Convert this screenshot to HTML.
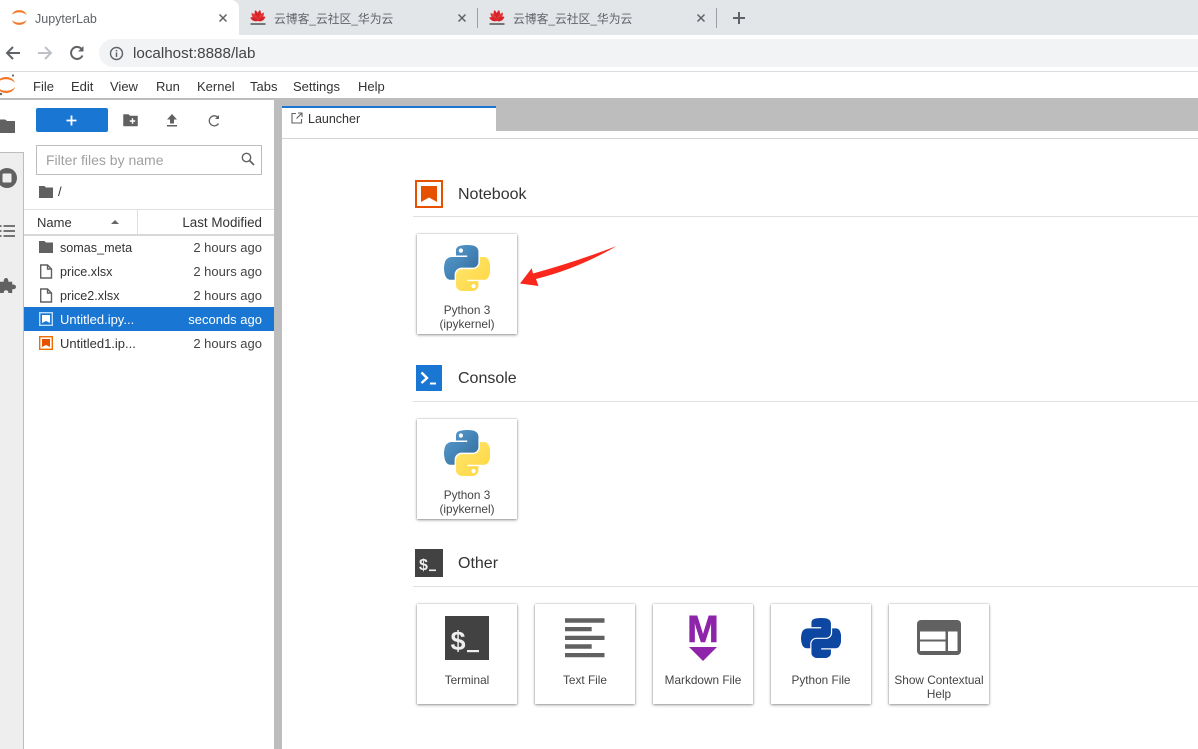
<!DOCTYPE html>
<html><head><meta charset="utf-8"><style>
html,body{margin:0;padding:0;background:#fff}
#p{position:relative;width:1198px;height:749px;overflow:hidden;background:#fff;font-family:"Liberation Sans","Noto Sans CJK SC",sans-serif;color:#333}
#p div,#p svg{position:absolute}
.t{white-space:nowrap;line-height:20px;height:20px}
.m{top:77px;font-size:13px;color:#333}
.n{font-size:12.600px;left:60px}
.d{font-size:13px;right:936px;text-align:right;color:#444}
.card{width:100px;height:100px;background:#fff;box-shadow:0 0 1px rgba(0,0,0,.35),0 1px 3px rgba(0,0,0,.4);}
.l{width:100px;text-align:center;font-size:11.800px;line-height:14px;color:#444}
.h{font-size:16px;left:458px;color:#333}
.hr{left:413px;right:0;height:1px;background:#e0e0e0}
</style></head><body><div id="p">
<svg width="0" height="0" style="position:absolute"><defs>
<linearGradient id="b" x1="0" y1="0" x2="1" y2="1"><stop offset="0" stop-color="#5a9fd4"/><stop offset="1" stop-color="#306998"/></linearGradient>
<linearGradient id="y" x1="0" y1="0" x2="1" y2="1"><stop offset="0" stop-color="#ffe873"/><stop offset="1" stop-color="#ffd43b"/></linearGradient>
<path id="pb" d="M54.919.001c-4.584.022-8.961.413-12.813 1.095C30.76 3.099 28.7 7.295 28.7 15.032v10.219h26.813v3.406H18.638c-7.793 0-14.616 4.684-16.75 13.594-2.462 10.213-2.571 16.586 0 27.25 1.906 7.938 6.458 13.594 14.25 13.594h9.219v-12.25c0-8.85 7.657-16.656 16.75-16.656h26.781c7.455 0 13.406-6.138 13.406-13.625V15.032c0-7.266-6.13-12.725-13.406-13.937C64.282.328 59.502-.02 54.918.002zM40.419 8.22c2.77 0 5.031 2.299 5.031 5.125 0 2.816-2.262 5.094-5.031 5.094-2.78 0-5.031-2.278-5.031-5.094 0-2.826 2.252-5.125 5.031-5.125z"/>
<path id="py" d="M85.638 28.657v11.906c0 9.231-7.826 17-16.75 17H42.106c-7.336 0-13.406 6.278-13.406 13.625v25.531c0 7.266 6.319 11.54 13.406 13.625 8.487 2.496 16.626 2.947 26.781 0 6.75-1.954 13.406-5.888 13.406-13.625V86.501H55.513v-3.405h40.187c7.793 0 10.696-5.436 13.406-13.594 2.8-8.399 2.681-16.476 0-27.25-1.926-7.757-5.604-13.594-13.406-13.594H85.638zM70.575 93.313c2.78 0 5.031 2.278 5.031 5.094 0 2.826-2.252 5.125-5.031 5.125-2.77 0-5.031-2.299-5.031-5.125 0-2.816 2.262-5.094 5.031-5.094z"/>
<g id="hw"><g fill="#d8232a">
<path d="M9 12C6 8 6.500 3 8.500 .8C11 3.500 11.500 8 9 12Z" transform="rotate(-11 9 12)"/>
<path d="M9 12C6 8 6.500 3 8.500 .8C11 3.500 11.500 8 9 12Z" transform="rotate(13 9 12)"/>
<path d="M9 12C6 8 6.500 4 8.500 1.800C11 4.500 11.500 8 9 12Z" transform="rotate(-36 9 12)" fill="#e0393a"/>
<path d="M9 12C6 8 6.500 4 8.500 1.800C11 4.500 11.500 8 9 12Z" transform="rotate(38 9 12)" fill="#e0393a"/>
<path d="M9 12C6.500 9.500 6.500 6 8.500 3.500C11 6 11.500 9.500 9 12Z" transform="rotate(-62 9 12)"/>
<path d="M9 12C6.500 9.500 6.500 6 8.500 3.500C11 6 11.500 9.500 9 12Z" transform="rotate(64 9 12)"/>
</g><rect x="1.500" y="14" width="15" height="2" fill="#777"/></g>
</defs></svg>

<!-- chrome tabs -->
<div style="left:0;top:0;width:1198px;height:35px;background:#e3e6e9"></div>
<div style="left:0;top:0;width:239px;height:35px;background:#fff;border-radius:0 8px 0 0"></div>
<svg style="left:11px;top:10px" width="17" height="16" viewBox="0 0 17 16"><path d="M1 5C2.500-1.500 14-1.500 15.500 5C12 1.500 4 1.500 1 5Z" fill="#f37726"/><path d="M1 10C2.500 16.500 14 16.500 15.500 10C12 13.500 4 13.500 1 10Z" fill="#f37726"/></svg>
<div class="t" style="left:35px;top:9px;font-size:12.500px;color:#5f6368">JupyterLab</div>
<svg style="left:218px;top:13px" width="10" height="10" viewBox="0 0 10 10"><path d="M1.500 1.500L8.500 8.500M8.500 1.500L1.500 8.500" stroke="#5f6368" stroke-width="1.500"/></svg>
<svg style="left:249px;top:9px" width="18" height="17" viewBox="0 0 18 17"><use href="#hw"/></svg>
<div class="t" style="left:274px;top:9px;font-size:11.800px;color:#5f6368">云博客_云社区_华为云</div>
<svg style="left:457px;top:13px" width="10" height="10" viewBox="0 0 10 10"><path d="M1.500 1.500L8.500 8.500M8.500 1.500L1.500 8.500" stroke="#5f6368" stroke-width="1.500"/></svg>
<div style="left:477px;top:8px;width:1px;height:20px;background:#9aa0a6"></div>
<svg style="left:488px;top:9px" width="18" height="17" viewBox="0 0 18 17"><use href="#hw"/></svg>
<div class="t" style="left:513px;top:9px;font-size:11.800px;color:#5f6368">云博客_云社区_华为云</div>
<svg style="left:696px;top:13px" width="10" height="10" viewBox="0 0 10 10"><path d="M1.500 1.500L8.500 8.500M8.500 1.500L1.500 8.500" stroke="#5f6368" stroke-width="1.500"/></svg>
<div style="left:716px;top:8px;width:1px;height:20px;background:#9aa0a6"></div>
<svg style="left:732px;top:11px" width="14" height="14" viewBox="0 0 14 14"><path d="M7 1V13M1 7H13" stroke="#5f6368" stroke-width="2"/></svg>

<!-- toolbar -->
<svg style="left:5px;top:45px" width="16" height="16" viewBox="0 0 16 16"><path d="M15 8H2M8 2L2 8L8 14" fill="none" stroke="#5f6368" stroke-width="2"/></svg>
<svg style="left:37px;top:45px" width="16" height="16" viewBox="0 0 16 16"><path d="M1 8H14M8 2L14 8L8 14" fill="none" stroke="#bdc1c6" stroke-width="2"/></svg>
<svg style="left:69px;top:45px" width="16" height="16" viewBox="0 0 16 16"><path d="M13.500 10.500A6 6 0 1 1 13 4.500" fill="none" stroke="#5f6368" stroke-width="2"/><path d="M14.500 1V6.500H9Z" fill="#5f6368"/></svg>
<div style="left:99px;top:39px;width:1110px;height:28px;border-radius:14px;background:#f1f3f4"></div>
<svg style="left:109px;top:46px" width="15" height="15" viewBox="0 0 15 15"><circle cx="7.500" cy="7.500" r="6" fill="none" stroke="#5f6368" stroke-width="1.400"/><path d="M7.500 6.500V11M7.500 4V5.400" stroke="#5f6368" stroke-width="1.500"/></svg>
<div class="t" style="left:133px;top:44px;font-size:15.200px;color:#444">localhost:8888/lab</div>
<div style="left:0;top:71px;width:1198px;height:1px;background:#dadce0"></div>

<!-- menu -->
<svg style="left:-4px;top:74px" width="24" height="22" viewBox="0 0 24 22"><path d="M1 9C3 1 17 1 19 9C15 4 5 4 1 9Z" fill="#f37726"/><path d="M1 13C3 21 17 21 19 13C15 18 5 18 1 13Z" fill="#f37726"/><circle cx="17" cy="1.500" r="1.100" fill="#666"/><circle cx="5" cy="20" r="1.200" fill="#666"/></svg>
<div class="t m" style="left:33px">File</div>
<div class="t m" style="left:71px">Edit</div>
<div class="t m" style="left:110px">View</div>
<div class="t m" style="left:156px">Run</div>
<div class="t m" style="left:197px">Kernel</div>
<div class="t m" style="left:250px">Tabs</div>
<div class="t m" style="left:293px">Settings</div>
<div class="t m" style="left:358px">Help</div>
<div style="left:0;top:98px;width:1198px;height:2px;background:#bdbdbd"></div>

<!-- sidebar -->
<div style="left:0;top:152px;width:23px;height:597px;background:#eee"></div>
<div style="left:0;top:152px;width:24px;height:1px;background:#bdbdbd"></div>
<div style="left:23px;top:152px;width:1px;height:597px;background:#bdbdbd"></div>
<svg style="left:-3px;top:116px" width="19" height="18" viewBox="0 0 19 18"><path d="M1 4H8L10 5.500H17.500V16.500H1Z" fill="#616161" stroke="#616161" stroke-linejoin="round"/></svg>
<svg style="left:-3px;top:168px" width="20" height="20" viewBox="0 0 20 20"><circle cx="10" cy="10" r="10" fill="#616161"/><rect x="5.500" y="5.500" width="9" height="9" rx="1" fill="#eee"/></svg>
<svg style="left:0;top:224px" width="16" height="14" viewBox="0 0 16 14"><path d="M0 2H1.500M3.500 2H15M0 7H1.500M3.500 7H15M0 12H1.500M3.500 12H15" stroke="#757575" stroke-width="2"/></svg>
<svg style="left:-2px;top:277px" width="18" height="17" viewBox="0 0 19 18"><path d="M2 5H6C6 2 7 1 8.500 1S11 2 11 5H15V8C18 8 19 9 19 10.500S18 13 15 13V17H11C11 15 10 14 8.500 14S6 15 6 17H2Z" fill="#616161"/></svg>

<!-- file browser -->
<div style="left:36px;top:108px;width:72px;height:24px;background:#1976d2;border-radius:2px"></div>
<svg style="left:66px;top:115px" width="11" height="11" viewBox="0 0 11 11"><path d="M5.500 .5V10.500M.5 5.500H10.500" stroke="#fff" stroke-width="1.800"/></svg>
<svg style="left:123px;top:113px" width="15" height="14" viewBox="0 0 15 14"><path d="M.5 1.500H5.500L7 3H14.500V13H.5Z" fill="#616161" stroke="#616161" stroke-width=".5" stroke-linejoin="round"/><path d="M9.500 5.300V10.700M6.800 8H12.200" stroke="#fff" stroke-width="1.400"/></svg>
<svg style="left:166px;top:114px" width="12" height="13" viewBox="0 0 12 13"><path d="M6 0L11 5.500H8V9.500H4V5.500H1Z M1 11H11V12.500H1Z" fill="#616161"/></svg>
<svg style="left:207px;top:114px" width="14" height="14" viewBox="0 0 14 14"><path d="M11.500 9.500A5 5 0 1 1 11 3.500" fill="none" stroke="#616161" stroke-width="1.300"/><path d="M12 1V5H8Z" fill="#616161"/></svg>
<div style="left:36px;top:145px;width:224px;height:28px;border:1px solid #bdbdbd"></div>
<div class="t" style="left:46px;top:150px;font-size:14px;color:#a0a0a0">Filter files by name</div>
<svg style="left:241px;top:152px" width="14" height="14" viewBox="0 0 14 14"><circle cx="5.500" cy="5.500" r="4.200" fill="none" stroke="#616161" stroke-width="1.400"/><path d="M8.500 8.500L13 13" stroke="#616161" stroke-width="1.700"/></svg>
<svg style="left:39px;top:186px" width="14" height="12" viewBox="0 0 14 12"><path d="M0 0H5.500L7 1.500H14V12H0Z" fill="#616161"/></svg>
<div class="t" style="left:58px;top:182px;font-size:13px;color:#333">/</div>
<div style="left:24px;top:209px;width:250px;height:1px;background:#e0e0e0"></div>
<div style="left:24px;top:234px;width:250px;height:2px;background:#d8d8d8"></div>
<div style="left:137px;top:210px;width:1px;height:24px;background:#e0e0e0"></div>
<div class="t" style="left:37px;top:213px;font-size:13px;color:#333">Name</div>
<svg style="left:110px;top:219px" width="10" height="5" viewBox="0 0 10 5"><path d="M1 5L5 1L9 5Z" fill="#666"/></svg>
<div class="t" style="right:936px;top:213px;font-size:13.400px;color:#333">Last Modified</div>

<svg style="left:39px;top:241px" width="14" height="12" viewBox="0 0 14 12"><path d="M0 0H5.500L7 1.500H14V12H0Z" fill="#616161"/></svg>
<div class="t n" style="top:238px">somas_meta</div><div class="t d" style="top:238px">2 hours ago</div>
<svg style="left:39px;top:264px" width="14" height="15" viewBox="0 0 14 15"><path d="M1.700 1H8.500L12.500 5V14H1.700ZM8.500 1V5H12.500" fill="none" stroke="#616161" stroke-width="1.400"/></svg>
<div class="t n" style="top:262px">price.xlsx</div><div class="t d" style="top:262px">2 hours ago</div>
<svg style="left:39px;top:288px" width="14" height="15" viewBox="0 0 14 15"><path d="M1.700 1H8.500L12.500 5V14H1.700ZM8.500 1V5H12.500" fill="none" stroke="#616161" stroke-width="1.400"/></svg>
<div class="t n" style="top:286px">price2.xlsx</div><div class="t d" style="top:286px">2 hours ago</div>
<div style="left:24px;top:307px;width:250px;height:24px;background:#1976d2"></div>
<svg style="left:39px;top:312px" width="14" height="14" viewBox="0 0 14 14"><rect x=".7" y=".7" width="12.600" height="12.600" fill="none" stroke="#bbdefb" stroke-width="1.400"/><path d="M3 3H11V11L7 9L3 11Z" fill="#fff"/></svg>
<div class="t n" style="top:310px;color:#fff;font-size:13px">Untitled.ipy...</div><div class="t d" style="top:310px;color:#fff">seconds ago</div>
<svg style="left:39px;top:336px" width="14" height="14" viewBox="0 0 14 14"><rect x=".7" y=".7" width="12.600" height="12.600" fill="none" stroke="#ef6c00" stroke-width="1.400"/><path d="M3 3H11V11L7 9L3 11Z" fill="#e65100"/></svg>
<div class="t n" style="top:334px;font-size:13px">Untitled1.ip...</div><div class="t d" style="top:334px">2 hours ago</div>

<!-- splitter / main tabs -->
<div style="left:274px;top:100px;width:8px;height:649px;background:#bdbdbd"></div>
<div style="left:282px;top:100px;width:916px;height:31px;background:#bdbdbd"></div>
<div style="left:282px;top:106px;width:214px;height:25px;background:#fff;border-top:2px solid #1976d2;box-sizing:border-box"></div>
<svg style="left:291px;top:112px" width="12" height="12" viewBox="0 0 12 12"><path d="M5 1.500H1V11H10.500V7M7 1H11V5M11 1L5.500 6.500" fill="none" stroke="#616161" stroke-width="1.100"/></svg>
<div class="t" style="left:308px;top:109px;font-size:12.500px;color:#333">Launcher</div>
<div style="left:282px;top:138px;width:916px;height:1px;background:#d5d5d5"></div>

<!-- Notebook -->
<svg style="left:415px;top:180px" width="28" height="28" viewBox="0 0 28 28"><rect x="1" y="1" width="26" height="26" fill="none" stroke="#e65100" stroke-width="2"/><path d="M6 6H22V22L14 17.500L6 22Z" fill="#e65100"/></svg>
<div class="t h" style="top:185px">Notebook</div>
<div class="hr" style="top:216px"></div>
<div class="card" style="left:417px;top:234px"></div>
<svg style="left:444px;top:245px" width="46" height="46" viewBox="0 0 110 110"><use href="#pb" fill="url(#b)"/><use href="#py" fill="url(#y)"/></svg>
<div class="l" style="left:417px;top:303px">Python 3<br>(ipykernel)</div>
<svg style="left:515px;top:240px" width="110" height="55" viewBox="515 240 110 55"><path d="M520 283.500L531.700 268.300L533 273.500Q575 262 616.700 246Q578 268.500 536 279L538.500 286Z" fill="#f9271c"/></svg>

<!-- Console -->
<div style="left:416px;top:365px;width:26px;height:26px;background:#1976d2"></div>
<svg style="left:416px;top:365px" width="26" height="26" viewBox="0 0 26 26"><path d="M5.500 7.500L11 13L5.500 18" fill="none" stroke="#fff" stroke-width="2.400"/><path d="M14 18.500H20" stroke="#fff" stroke-width="2"/></svg>
<div class="t h" style="top:369px">Console</div>
<div class="hr" style="top:401px"></div>
<div class="card" style="left:417px;top:419px"></div>
<svg style="left:444px;top:430px" width="46" height="46" viewBox="0 0 110 110"><use href="#pb" fill="url(#b)"/><use href="#py" fill="url(#y)"/></svg>
<div class="l" style="left:417px;top:488px">Python 3<br>(ipykernel)</div>

<!-- Other -->
<svg style="left:415px;top:549px" width="28" height="28" viewBox="0 0 28 28"><rect width="28" height="28" fill="#424242"/><text x="4" y="21" font-family="Liberation Sans" font-weight="bold" font-size="16" fill="#eee">$</text><rect x="14" y="20.500" width="7" height="1.600" fill="#eee"/></svg>
<div class="t h" style="top:554px">Other</div>
<div class="hr" style="top:586px"></div>

<div class="card" style="left:417px;top:604px"></div>
<svg style="left:445px;top:616px" width="44" height="44" viewBox="0 0 44 44"><rect width="44" height="44" fill="#424242"/><text x="5.500" y="34" font-family="Liberation Sans" font-weight="bold" font-size="27" fill="#eee">$</text><rect x="22" y="34" width="12" height="2.200" fill="#eee"/></svg>
<div class="l" style="left:417px;top:673px">Terminal</div>

<div class="card" style="left:535px;top:604px"></div>
<svg style="left:565px;top:618px" width="40" height="40" viewBox="0 0 40 40"><path d="M0 .3H39.500V4.700H0ZM0 9H26.700V13.300H0ZM0 17.700H39.500V22H0ZM0 26.300H26.700V30.700H0ZM0 35H39.500V39.300H0Z" fill="#616161"/></svg>
<div class="l" style="left:535px;top:673px">Text File</div>

<div class="card" style="left:653px;top:604px"></div>
<svg style="left:686px;top:612px" width="34" height="50" viewBox="0 0 34 50"><text x="17" y="30" text-anchor="middle" font-family="Liberation Sans" font-weight="bold" font-size="38" fill="#8e24aa" stroke="#8e24aa" stroke-width=".6">M</text><path d="M3 35H31L17 49Z" fill="#8e24aa"/></svg>
<div class="l" style="left:653px;top:673px">Markdown File</div>

<div class="card" style="left:771px;top:604px"></div>
<svg style="left:801px;top:618px" width="40" height="40" viewBox="0 0 110 110"><use href="#pb" fill="#0d47a1"/><use href="#py" fill="#0d47a1"/><circle cx="40.400" cy="13.300" r="6" fill="#0d47a1"/><circle cx="70.600" cy="98.400" r="6" fill="#0d47a1"/></svg>
<div class="l" style="left:771px;top:673px">Python File</div>

<div class="card" style="left:889px;top:604px"></div>
<svg style="left:917px;top:620px" width="44" height="36" viewBox="0 0 44 36"><rect width="44" height="35" rx="4" fill="#616161"/><path d="M3 11.500H28.500V19.500H3ZM3 21.500H28.500V31H3ZM31 11.500H40.500V31H31Z" fill="#fff"/></svg>
<div class="l" style="left:889px;top:673px">Show Contextual Help</div>
</div></body></html>
